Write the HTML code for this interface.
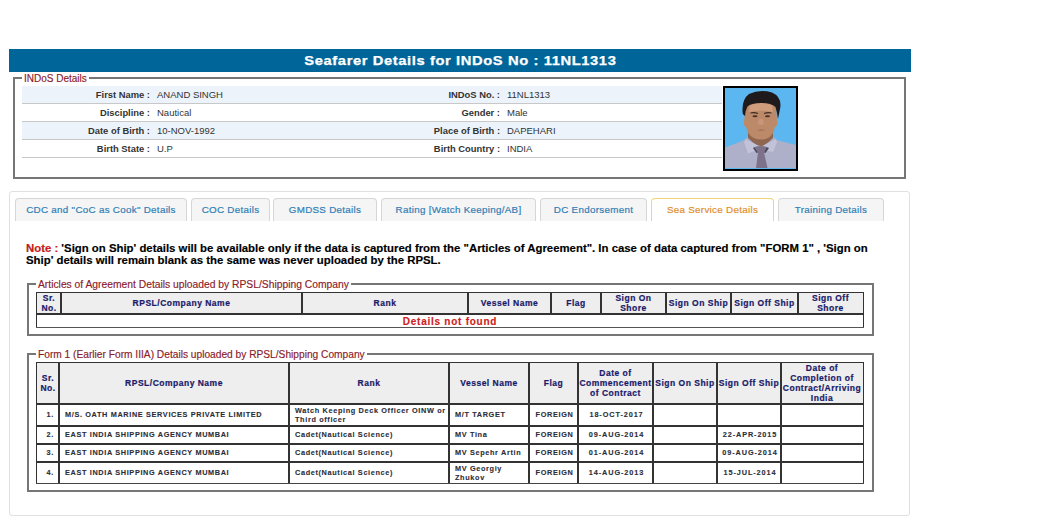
<!DOCTYPE html>
<html><head><meta charset="utf-8">
<style>
*{box-sizing:border-box;margin:0;padding:0}
html,body{width:1042px;height:532px;background:#fff;overflow:hidden;position:relative;font-family:"Liberation Sans",sans-serif}
.abs{position:absolute}
#hdr{left:9px;top:49px;width:902px;height:23px;background:#006699;color:#fff;font-weight:bold;font-size:12px;letter-spacing:0.5px;text-align:center;line-height:24px;white-space:nowrap}
#hdr span{display:inline-block;transform:scaleX(1.225);-webkit-text-stroke:0.25px #fff}
.fs{position:absolute;border:2px solid #767676}
.lg{position:absolute;background:#fff;color:#8b1a2a;white-space:nowrap;padding:0 2px;-webkit-text-stroke:0.15px #8b1a2a}
#info .row{position:absolute;left:22px;width:700px;height:18px;border-bottom:1px solid #c8c8c8}
#info .band{background:#ecf3fb}
.lbl{position:absolute;font-weight:bold;color:#333;font-size:9.4px;white-space:nowrap;text-align:right;top:0;line-height:17px}
.val{position:absolute;color:#333;font-size:9.5px;white-space:nowrap;top:0;line-height:17px}
#tabbox{left:9px;top:191px;width:901px;height:325px;border:1px solid #e0e0e0;border-radius:3px}
.tab{position:absolute;top:198px;height:23px;border:1px solid #d6d6d6;border-bottom:none;border-radius:4px 4px 0 0;background:#f5f5f5;color:#317fb5;font-size:9.8px;letter-spacing:0.3px;text-align:center;line-height:21px;white-space:nowrap;-webkit-text-stroke:0.2px #317fb5}
.tab.act{background:#fff;border-color:#f0d67a;color:#e08e2c;-webkit-text-stroke:0.2px #e08e2c}
#note{left:26px;top:243px;width:880px;font-weight:bold;font-size:10px;transform:scaleX(1.137);transform-origin:0 0;-webkit-text-stroke:0.15px #000;line-height:12px;color:#000;white-space:nowrap}
#note .r{color:#e21b1b}
.cell{position:absolute;display:flex;align-items:center;white-space:nowrap;overflow:visible}
.th{color:#1a1a6a;font-weight:bold;font-size:8.5px;letter-spacing:0.5px;line-height:10px;padding-bottom:2px;-webkit-text-stroke:0.2px #1a1a6a}
.td{color:#2b2d38;font-weight:bold;font-size:7.3px;letter-spacing:0.65px;line-height:9px;-webkit-text-stroke:0.1px #2b2d38}
.nf{color:#d01c1c;font-weight:bold;font-size:10px;letter-spacing:0.75px;line-height:12px;-webkit-text-stroke:0.15px #d01c1c}
</style></head><body>

<div id="hdr" class="abs"><span>Seafarer Details for INDoS No : 11NL1313</span></div>

<!-- INDoS fieldset -->
<div class="fs" style="left:13px;top:77px;width:893px;height:102px"></div>
<div class="lg" style="left:22px;top:73px;font-size:10px;line-height:12px">INDoS Details</div>
<div id="info">
  <div class="row band" style="top:86px"><span class="lbl" style="right:572px">First Name :</span><span class="val" style="left:135px">ANAND SINGH</span><span class="lbl" style="right:222px">INDoS No. :</span><span class="val" style="left:485px">11NL1313</span></div>
  <div class="row" style="top:104px"><span class="lbl" style="right:572px">Discipline :</span><span class="val" style="left:135px">Nautical</span><span class="lbl" style="right:222px">Gender :</span><span class="val" style="left:485px">Male</span></div>
  <div class="row band" style="top:122px"><span class="lbl" style="right:572px">Date of Birth :</span><span class="val" style="left:135px">10-NOV-1992</span><span class="lbl" style="right:222px">Place of Birth :</span><span class="val" style="left:485px">DAPEHARI</span></div>
  <div class="row" style="top:140px"><span class="lbl" style="right:572px">Birth State :</span><span class="val" style="left:135px">U.P</span><span class="lbl" style="right:222px">Birth Country :</span><span class="val" style="left:485px">INDIA</span></div>
</div>
<div class="abs" id="photo" style="left:723px;top:86px;width:75px;height:85px;border:2px solid #000;background:#5db6ef;overflow:hidden">
<svg width="71" height="80" viewBox="0 0 71 80" style="display:block">
<rect width="71" height="80" fill="#5cb6ef"/>
<path d="M0 59.5 Q8 57 19 52 L24 48 L47 48 L52 52 Q63 55 71 57 L71 80 L0 80 Z" fill="#aeb0ca"/>
<path d="M23 40 L48 40 L48 50 Q40 58 36 58 Q31 58 23 50 Z" fill="#8f6650"/>
<path d="M19 33 Q18 38 21 39 Q23 48 30 50.5 Q36 52.5 42 50.5 Q48 48 50 39 Q53 38 52 33 L51 17 Q44 12 36 12 Q27 12 21 17 Z" fill="#bd8a69"/>
<path d="M25 17 Q36 13 47 17 L48 24 Q36 21 24 24 Z" fill="#cf9d7c"/>
<path d="M17.8 26 Q16 12 24 6 Q35 1 47 4.5 Q57 9 55.2 20 L53 31 Q52 24 50.5 19 Q46 15 36 15 Q26 15 22.5 18.5 Q20.5 22 20 28 Z" fill="#1f1b1d"/>
<path d="M25.5 25 Q29 24 33 25.5" stroke="#3b2a24" stroke-width="1.2" fill="none"/>
<path d="M39 25.5 Q43 24 46.5 25" stroke="#3b2a24" stroke-width="1.2" fill="none"/>
<ellipse cx="30" cy="28.2" rx="2.6" ry="1" fill="#4a3028"/>
<ellipse cx="42.5" cy="28.2" rx="2.6" ry="1" fill="#4a3028"/>
<path d="M34 31 L33 36 L37 37 L39 36 L38 31 Z" fill="#c8967a"/>
<path d="M32 42 Q36 41 40 42 Q36 43.5 32 42 Z" fill="#9a6a5e"/>
<path d="M21 51 L35.5 59.3 L32 62 L23 65.6 L19 54 Z" fill="#c2c3d8"/>
<path d="M50.5 51 L35.5 59.3 L39 62 L48 64 L52 54 Z" fill="#c2c3d8"/>
<path d="M29.5 59 Q35.5 57 41.5 59 L39 64.5 L42.5 80 L31 80 L33 64.5 Z" fill="#7d7289"/>
<path d="M29.5 59 L33 64.5 L31.5 65 L28 60 Z" fill="#4d475c"/>
<path d="M41.5 59 L39 64.5 L40.5 65 L44 60 Z" fill="#4d475c"/>
</svg></div>

<!-- tabs -->
<div id="tabbox" class="abs"></div>
<div class="tab" style="left:15px;width:172px">CDC and "CoC as Cook" Details</div>
<div class="tab" style="left:191px;width:79px">COC Details</div>
<div class="tab" style="left:273px;width:104px">GMDSS Details</div>
<div class="tab" style="left:381px;width:155px">Rating [Watch Keeping/AB]</div>
<div class="tab" style="left:540px;width:107px">DC Endorsement</div>
<div class="tab act" style="left:651px;width:123px">Sea Service Details</div>
<div class="tab" style="left:778px;width:106px">Training Details</div>

<div id="note" class="abs"><span class="r">Note : </span>'Sign on Ship' details will be available only if the data is captured from the "Articles of Agreement". In case of data captured from "FORM 1" , 'Sign on<br>Ship' details will remain blank as the same was never uploaded by the RPSL.</div>

<!-- Articles fieldset -->
<div class="fs" style="left:27px;top:283px;width:847px;height:53px"></div>
<div class="lg" style="left:36px;top:279px;font-size:10.3px;line-height:12px">Articles of Agreement Details uploaded by RPSL/Shipping Company</div>

<!-- Form 1 fieldset -->
<div class="fs" style="left:27px;top:353px;width:847px;height:139px"></div>
<div class="lg" style="left:36px;top:349px;font-size:10.2px;line-height:12px">Form 1 (Earlier Form IIIA) Details uploaded by RPSL/Shipping Company</div>

<div class="abs" style="left:36px;top:292px;width:828px;height:21px;background:#eee"></div>
<div class="abs" style="left:36px;top:292px;width:1px;height:35px;background:#333"></div>
<div class="abs" style="left:60px;top:292px;width:2px;height:21px;background:#333"></div>
<div class="abs" style="left:301px;top:292px;width:2px;height:21px;background:#333"></div>
<div class="abs" style="left:467px;top:292px;width:2px;height:21px;background:#333"></div>
<div class="abs" style="left:550px;top:292px;width:2px;height:21px;background:#333"></div>
<div class="abs" style="left:600px;top:292px;width:2px;height:21px;background:#333"></div>
<div class="abs" style="left:665px;top:292px;width:2px;height:21px;background:#333"></div>
<div class="abs" style="left:730px;top:292px;width:2px;height:21px;background:#333"></div>
<div class="abs" style="left:797px;top:292px;width:2px;height:21px;background:#333"></div>
<div class="abs" style="left:863px;top:292px;width:1px;height:35px;background:#333"></div>
<div class="abs" style="left:36px;top:292px;width:828px;height:1px;background:#333"></div>
<div class="abs" style="left:36px;top:313px;width:828px;height:2px;background:#333"></div>
<div class="abs" style="left:36px;top:327px;width:828px;height:1px;background:#555"></div>
<div class="cell th" style="left:37px;top:293px;width:24px;height:20px;justify-content:center;text-align:center;padding-left:0px;padding-right:0px;padding-bottom:0"><span>Sr.<br>No.</span></div>
<div class="cell th" style="left:61px;top:293px;width:241px;height:20px;justify-content:center;text-align:center;padding-left:0px;padding-right:0px;padding-bottom:0"><span>RPSL/Company Name</span></div>
<div class="cell th" style="left:302px;top:293px;width:166px;height:20px;justify-content:center;text-align:center;padding-left:0px;padding-right:0px;padding-bottom:0"><span>Rank</span></div>
<div class="cell th" style="left:468px;top:293px;width:83px;height:20px;justify-content:center;text-align:center;padding-left:0px;padding-right:0px;padding-bottom:0"><span>Vessel Name</span></div>
<div class="cell th" style="left:551px;top:293px;width:50px;height:20px;justify-content:center;text-align:center;padding-left:0px;padding-right:0px;padding-bottom:0"><span>Flag</span></div>
<div class="cell th" style="left:601px;top:293px;width:65px;height:20px;justify-content:center;text-align:center;padding-left:0px;padding-right:0px;padding-bottom:0"><span>Sign On<br>Shore</span></div>
<div class="cell th" style="left:666px;top:293px;width:65px;height:20px;justify-content:center;text-align:center;padding-left:0px;padding-right:0px;padding-bottom:0"><span>Sign On Ship</span></div>
<div class="cell th" style="left:731px;top:293px;width:67px;height:20px;justify-content:center;text-align:center;padding-left:0px;padding-right:0px;padding-bottom:0"><span>Sign Off Ship</span></div>
<div class="cell th" style="left:798px;top:293px;width:65px;height:20px;justify-content:center;text-align:center;padding-left:0px;padding-right:0px;padding-bottom:0"><span>Sign Off<br>Shore</span></div>
<div class="cell nf" style="left:36px;top:315px;width:828px;height:12px;justify-content:center;text-align:center;padding-left:0px;padding-right:0px;padding-top:2px"><span>Details not found</span></div>
<div class="abs" style="left:36px;top:362px;width:828px;height:41px;background:#eee"></div>
<div class="abs" style="left:36px;top:362px;width:1px;height:122px;background:#333"></div>
<div class="abs" style="left:58px;top:362px;width:2px;height:122px;background:#333"></div>
<div class="abs" style="left:288px;top:362px;width:2px;height:122px;background:#333"></div>
<div class="abs" style="left:448px;top:362px;width:2px;height:122px;background:#333"></div>
<div class="abs" style="left:528px;top:362px;width:2px;height:122px;background:#333"></div>
<div class="abs" style="left:577px;top:362px;width:2px;height:122px;background:#333"></div>
<div class="abs" style="left:652px;top:362px;width:2px;height:122px;background:#333"></div>
<div class="abs" style="left:716px;top:362px;width:2px;height:122px;background:#333"></div>
<div class="abs" style="left:780px;top:362px;width:2px;height:122px;background:#333"></div>
<div class="abs" style="left:863px;top:362px;width:1px;height:122px;background:#333"></div>
<div class="abs" style="left:36px;top:362px;width:828px;height:1px;background:#333"></div>
<div class="abs" style="left:36px;top:403px;width:828px;height:2px;background:#333"></div>
<div class="abs" style="left:36px;top:425px;width:828px;height:2px;background:#333"></div>
<div class="abs" style="left:36px;top:443px;width:828px;height:2px;background:#333"></div>
<div class="abs" style="left:36px;top:461px;width:828px;height:2px;background:#333"></div>
<div class="abs" style="left:36px;top:483px;width:828px;height:1px;background:#444"></div>
<div class="cell th" style="left:38px;top:364px;width:20px;height:39px;justify-content:center;text-align:center;padding-left:0px;padding-right:0px;"><span>Sr.<br>No.</span></div>
<div class="cell th" style="left:60px;top:364px;width:228px;height:39px;justify-content:center;text-align:center;padding-left:0px;padding-right:0px;"><span>RPSL/Company Name</span></div>
<div class="cell th" style="left:290px;top:364px;width:158px;height:39px;justify-content:center;text-align:center;padding-left:0px;padding-right:0px;"><span>Rank</span></div>
<div class="cell th" style="left:450px;top:364px;width:78px;height:39px;justify-content:center;text-align:center;padding-left:0px;padding-right:0px;"><span>Vessel Name</span></div>
<div class="cell th" style="left:530px;top:364px;width:47px;height:39px;justify-content:center;text-align:center;padding-left:0px;padding-right:0px;"><span>Flag</span></div>
<div class="cell th" style="left:579px;top:364px;width:73px;height:39px;justify-content:center;text-align:center;padding-left:0px;padding-right:0px;"><span>Date of<br>Commencement<br>of Contract</span></div>
<div class="cell th" style="left:654px;top:364px;width:62px;height:39px;justify-content:center;text-align:center;padding-left:0px;padding-right:0px;"><span>Sign On Ship</span></div>
<div class="cell th" style="left:718px;top:364px;width:62px;height:39px;justify-content:center;text-align:center;padding-left:0px;padding-right:0px;"><span>Sign Off Ship</span></div>
<div class="cell th" style="left:782px;top:364px;width:80px;height:39px;justify-content:center;text-align:center;padding-left:0px;padding-right:0px;"><span>Date of<br>Completion of<br>Contract/Arriving<br>India</span></div>
<div class="cell td" style="left:38px;top:405px;width:20px;height:20px;justify-content:flex-end;text-align:right;padding-left:0px;padding-right:4px;padding-bottom:1px"><span>1.</span></div>
<div class="cell td" style="left:60px;top:405px;width:228px;height:20px;justify-content:flex-start;text-align:left;padding-left:5px;padding-right:0px;padding-bottom:1px"><span>M/S. OATH MARINE SERVICES PRIVATE LIMITED</span></div>
<div class="cell td" style="left:290px;top:405px;width:158px;height:20px;justify-content:flex-start;text-align:left;padding-left:5px;padding-right:0px;padding-top:0px"><span>Watch Keeping Deck Officer OINW or<br>Third officer</span></div>
<div class="cell td" style="left:450px;top:405px;width:78px;height:20px;justify-content:flex-start;text-align:left;padding-left:5px;padding-right:0px;padding-bottom:1px"><span>M/T TARGET</span></div>
<div class="cell td" style="left:530px;top:405px;width:47px;height:20px;justify-content:center;text-align:center;padding-left:2px;padding-right:0px;padding-bottom:1px"><span>FOREIGN</span></div>
<div class="cell td" style="left:579px;top:405px;width:73px;height:20px;justify-content:center;text-align:center;padding-left:2px;padding-right:0px;padding-bottom:1px;letter-spacing:0.9px"><span>18-OCT-2017</span></div>
<div class="cell td" style="left:38px;top:427px;width:20px;height:16px;justify-content:flex-end;text-align:right;padding-left:0px;padding-right:4px;padding-bottom:1px"><span>2.</span></div>
<div class="cell td" style="left:60px;top:427px;width:228px;height:16px;justify-content:flex-start;text-align:left;padding-left:5px;padding-right:0px;padding-bottom:1px"><span>EAST INDIA SHIPPING AGENCY MUMBAI</span></div>
<div class="cell td" style="left:290px;top:427px;width:158px;height:16px;justify-content:flex-start;text-align:left;padding-left:5px;padding-right:0px;padding-bottom:1px"><span>Cadet(Nautical Science)</span></div>
<div class="cell td" style="left:450px;top:427px;width:78px;height:16px;justify-content:flex-start;text-align:left;padding-left:5px;padding-right:0px;padding-bottom:1px"><span>MV Tina</span></div>
<div class="cell td" style="left:530px;top:427px;width:47px;height:16px;justify-content:center;text-align:center;padding-left:2px;padding-right:0px;padding-bottom:1px"><span>FOREIGN</span></div>
<div class="cell td" style="left:579px;top:427px;width:73px;height:16px;justify-content:center;text-align:center;padding-left:2px;padding-right:0px;padding-bottom:1px;letter-spacing:0.9px"><span>09-AUG-2014</span></div>
<div class="cell td" style="left:718px;top:427px;width:62px;height:16px;justify-content:center;text-align:center;padding-left:2px;padding-right:0px;padding-bottom:1px;letter-spacing:0.9px"><span>22-APR-2015</span></div>
<div class="cell td" style="left:38px;top:445px;width:20px;height:16px;justify-content:flex-end;text-align:right;padding-left:0px;padding-right:4px;padding-bottom:1px"><span>3.</span></div>
<div class="cell td" style="left:60px;top:445px;width:228px;height:16px;justify-content:flex-start;text-align:left;padding-left:5px;padding-right:0px;padding-bottom:1px"><span>EAST INDIA SHIPPING AGENCY MUMBAI</span></div>
<div class="cell td" style="left:290px;top:445px;width:158px;height:16px;justify-content:flex-start;text-align:left;padding-left:5px;padding-right:0px;padding-bottom:1px"><span>Cadet(Nautical Science)</span></div>
<div class="cell td" style="left:450px;top:445px;width:78px;height:16px;justify-content:flex-start;text-align:left;padding-left:5px;padding-right:0px;padding-bottom:1px"><span>MV Sepehr Artin</span></div>
<div class="cell td" style="left:530px;top:445px;width:47px;height:16px;justify-content:center;text-align:center;padding-left:2px;padding-right:0px;padding-bottom:1px"><span>FOREIGN</span></div>
<div class="cell td" style="left:579px;top:445px;width:73px;height:16px;justify-content:center;text-align:center;padding-left:2px;padding-right:0px;padding-bottom:1px;letter-spacing:0.9px"><span>01-AUG-2014</span></div>
<div class="cell td" style="left:718px;top:445px;width:62px;height:16px;justify-content:center;text-align:center;padding-left:2px;padding-right:0px;padding-bottom:1px;letter-spacing:0.9px"><span>09-AUG-2014</span></div>
<div class="cell td" style="left:38px;top:463px;width:20px;height:19px;justify-content:flex-end;text-align:right;padding-left:0px;padding-right:4px;padding-bottom:1px"><span>4.</span></div>
<div class="cell td" style="left:60px;top:463px;width:228px;height:19px;justify-content:flex-start;text-align:left;padding-left:5px;padding-right:0px;padding-bottom:1px"><span>EAST INDIA SHIPPING AGENCY MUMBAI</span></div>
<div class="cell td" style="left:290px;top:463px;width:158px;height:19px;justify-content:flex-start;text-align:left;padding-left:5px;padding-right:0px;padding-bottom:1px"><span>Cadet(Nautical Science)</span></div>
<div class="cell td" style="left:450px;top:463px;width:78px;height:19px;justify-content:flex-start;text-align:left;padding-left:5px;padding-right:0px;padding-top:0px"><span>MV Georgiy<br>Zhukov</span></div>
<div class="cell td" style="left:530px;top:463px;width:47px;height:19px;justify-content:center;text-align:center;padding-left:2px;padding-right:0px;padding-bottom:1px"><span>FOREIGN</span></div>
<div class="cell td" style="left:579px;top:463px;width:73px;height:19px;justify-content:center;text-align:center;padding-left:2px;padding-right:0px;padding-bottom:1px;letter-spacing:0.9px"><span>14-AUG-2013</span></div>
<div class="cell td" style="left:718px;top:463px;width:62px;height:19px;justify-content:center;text-align:center;padding-left:2px;padding-right:0px;padding-bottom:1px;letter-spacing:0.9px"><span>15-JUL-2014</span></div>
</body></html>
